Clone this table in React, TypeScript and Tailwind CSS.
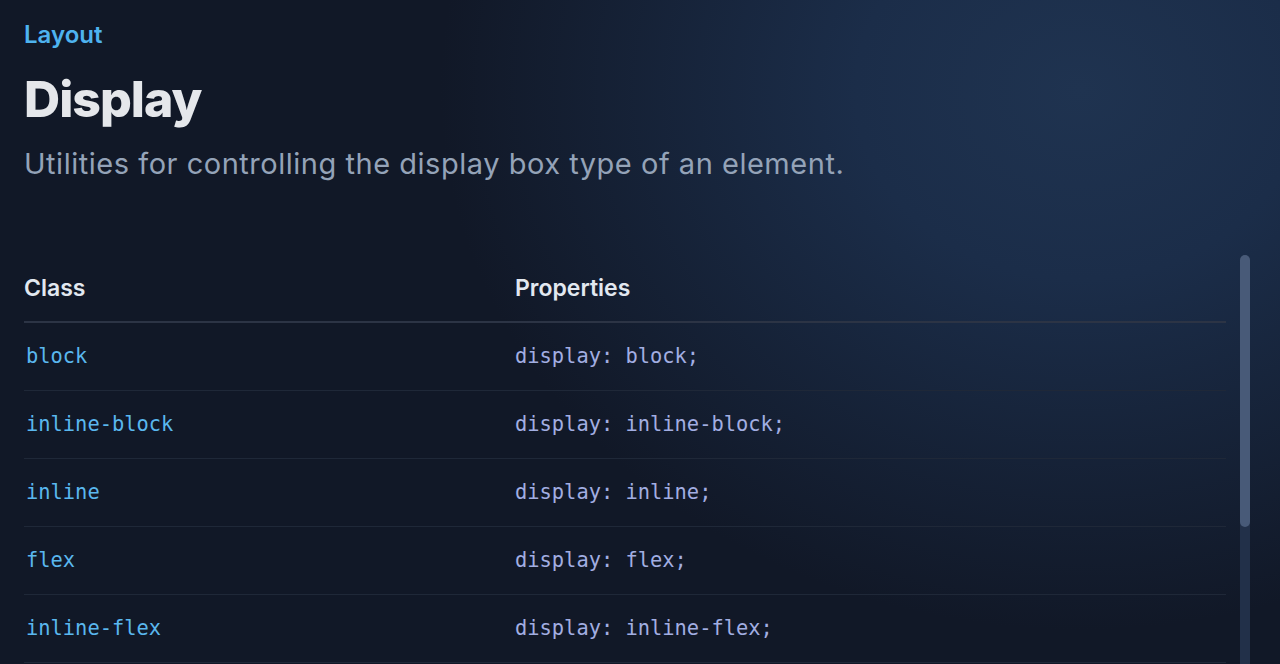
import React from "react";

const rows = [
  ["block", "display: block;"],
  ["inline-block", "display: inline-block;"],
  ["inline", "display: inline;"],
  ["flex", "display: flex;"],
  ["inline-flex", "display: inline-flex;"],
];

export default function App() {
  return (
    <div className="relative h-[664px] w-[1280px] overflow-hidden bg-[#111827] font-['Inter',sans-serif]">
      <div className="pointer-events-none absolute inset-0 bg-[radial-gradient(ellipse_640px_540px_at_1080px_90px,#1f3350_0%,#1b2d49_35%,rgba(17,24,39,0)_100%)]" />
      <div className="relative flex h-full flex-col pl-6 pr-[30px]">
        <div className="mt-[19px] text-[24px] font-semibold leading-[32px] text-[#4eb3ef]">Layout</div>
        <h1 className="mt-[20px] text-[50px] font-extrabold leading-[56px] tracking-[-0.02em] text-[#e5e7eb]">
          Display
        </h1>
        <p className="mt-[18px] text-[29px] leading-[38px] tracking-[0.018em] text-[#94a3b8]">
          Utilities for controlling the display box type of an element.
        </p>
        <div className="mt-[72px] flex min-h-0 flex-1 gap-[14px]">
          <div className="flex min-w-0 flex-1 flex-col overflow-hidden">
            <div className="flex h-[68px] shrink-0 items-center border-b-2 border-[#2c3445] text-[23px] font-semibold text-[#e2e8f0]">
              <div className="w-[491px]">Class</div>
              <div>Properties</div>
            </div>
            {rows.map(([c, p]) => (
              <div
                key={c}
                className="flex h-[68px] shrink-0 items-center border-b border-[#1f2838] font-['DejaVu_Sans_Mono',monospace] text-[20.4px]"
              >
                <div className="w-[491px] pl-[2px] text-[#5ab7ee]">{c}</div>
                <div className="text-[#a2aee2]">{p}</div>
              </div>
            ))}
          </div>
          <div className="relative w-[10px] shrink-0 rounded-t-full bg-[#223049]">
            <div className="absolute left-0 right-0 top-0 h-[272px] rounded-full bg-[#485a78]" />
          </div>
        </div>
      </div>
    </div>
  );
}
